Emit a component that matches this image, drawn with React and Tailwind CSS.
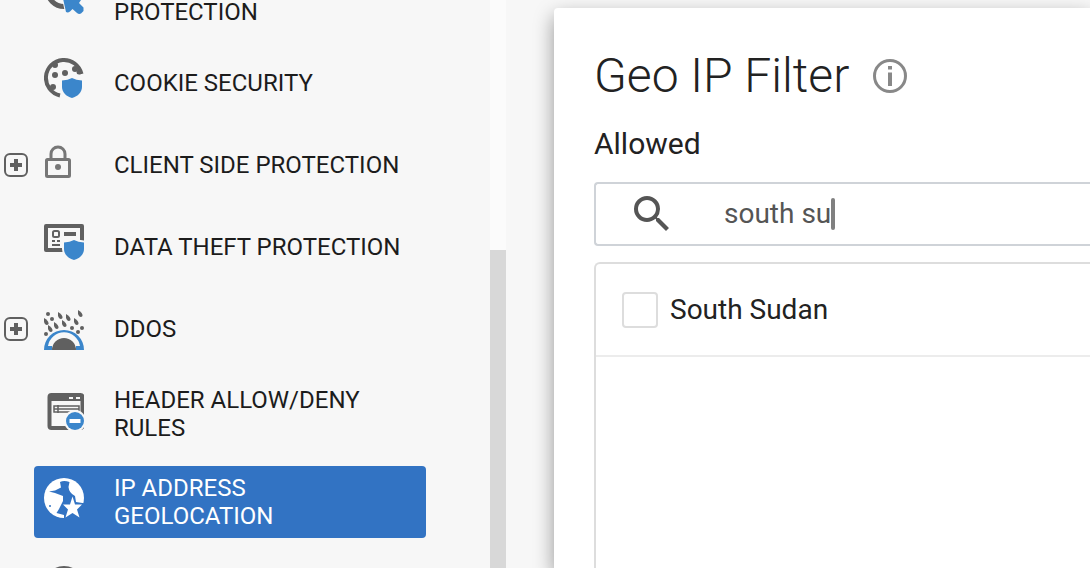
import { useState } from 'react';
import { MdSearch } from 'react-icons/md';
import clsx from 'clsx';

const SHIELD = 'M0 2.5Q6 2 10 0Q14 2 20 2.5V9C20 14 16 18.5 10 20C4 18.5 0 14 0 9Z';

const DROPS = [[16, 15], [24, 17], [36, 13], [2, 21], [12, 25], [20, 23], [32, 21], [6, 28]];
const DOTS = [[4, 13], [8, 18], [28, 27], [2, 33], [34, 31], [38, 27]];

function Icon({ children }) {
  return (
    <svg viewBox="0 0 40 56" className="w-10 h-14 shrink-0" fill="none" aria-hidden="true">
      {children}
    </svg>
  );
}

function PointerIcon() {
  return (
    <Icon>
      <circle cx="20" cy="20" r="16.500" stroke="#606060" strokeWidth="5" />
      <path d="M18 24L41 24L35 33L39.500 37.500V41L37 43.500Q35 44.500 33 43L28.500 39L26 41.500Q24 43 22 42Z" fill="#3b86cb" stroke="#f7f7f7" strokeWidth="2" paintOrder="stroke" />
    </Icon>
  );
}

function CookieIcon() {
  return (
    <Icon>
      <path d="M37.500 19A18 18 0 1 0 16 40.500" stroke="#606060" strokeWidth="4" />
      <g fill="#606060">
        <circle cx="11" cy="10" r="3" />
        <circle cx="11" cy="20" r="3" />
        <circle cx="21" cy="18" r="3" />
        <circle cx="31" cy="14" r="3" />
        <circle cx="35" cy="17" r="2.500" />
        <circle cx="9" cy="32" r="3" />
      </g>
      <path d={SHIELD} transform="translate(18 23)" fill="#3b86cb" />
    </Icon>
  );
}

function LockIcon() {
  return (
    <Icon>
      <path d="M7 21V17A7 7 0 0 1 21 17V21" stroke="#777" strokeWidth="3" />
      <rect x="2.500" y="22.500" width="23" height="17" rx="1" stroke="#777" strokeWidth="3" />
      <circle cx="14" cy="30" r="3" fill="#777" />
    </Icon>
  );
}

function CardIcon() {
  return (
    <Icon>
      <rect x="2" y="7" width="36" height="24" stroke="#606060" strokeWidth="4" strokeLinejoin="round" />
      <rect x="9" y="12" width="6" height="6" rx="1.500" stroke="#606060" strokeWidth="2" />
      <path d="M20 15H32" stroke="#606060" strokeWidth="4" />
      <path d="M8 22H11M13 22H16M8 26H16" stroke="#606060" strokeWidth="2" />
      <path d={SHIELD} transform="translate(20 21)" fill="#3b86cb" stroke="#f7f7f7" strokeWidth="4" paintOrder="stroke" />
    </Icon>
  );
}

function StormIcon() {
  return (
    <Icon>
      <g fill="#606060">
        {DROPS.map(([x, y]) => (
          <path key={`${x}-${y}`} d={`M${x - 2} ${y - 4}Q${x + 3} ${y - 1} ${x + 2.5} ${y + 2}Q${x + 1} ${y + 4} ${x - 1} ${y + 2}Q${x - 2.5} ${y} ${x - 2} ${y - 4}Z`} />
        ))}
        {DOTS.map(([x, y]) => <circle key={`${x}-${y}`} cx={x} cy={y} r="2" />)}
        <path d="M8 49A12 12 0 0 1 32 49Z" />
      </g>
      <path d="M0 49A20 20 0 0 1 40 49H32V45H36A16.200 16.200 0 0 0 4 45H8V49Z" fill="#3b86cb" />
    </Icon>
  );
}

function WindowIcon() {
  return (
    <Icon>
      <rect x="5.500" y="9" width="33" height="33" rx="2" stroke="#606060" strokeWidth="4" />
      <path d="M4 9H40V15H4Z" fill="#606060" />
      <path d="M25 12H29M32 12H36" stroke="#f7f7f7" strokeWidth="2" />
      <path d="M10 20H35V26H10ZM10 23H35M14 19V27" stroke="#606060" strokeWidth="1.500" />
      <circle cx="31" cy="35" r="11" fill="#f7f7f7" />
      <circle cx="31" cy="35" r="9" fill="#3b86cb" />
      <path d="M25.500 35H36.500" stroke="#fff" strokeWidth="4" />
    </Icon>
  );
}

function GlobeIcon() {
  return (
    <Icon>
      <circle cx="20" cy="24" r="20" fill="#fff" />
      <path d="M16 8Q20 6 25.500 8L24.500 13Q25 19 31 22L32 28L41 29.500V46H20V41L12.500 39L15 35L19 27V22L11 19L5 17.500L11 16.500L17 13.500Z" fill="#3273c3" />
      <circle cx="6" cy="32" r="1" fill="#3273c3" />
      <path d="M28.500 22.500L31 30.500H38L33 35.500L35.500 43.500L28.500 39L21.500 43.500L24 35.500L19 30.500H26Z" fill="#fff" />
    </Icon>
  );
}

function RingIcon() {
  return (
    <Icon>
      <circle cx="20" cy="27" r="18" stroke="#606060" strokeWidth="4" />
    </Icon>
  );
}

function InfoIcon() {
  return (
    <svg viewBox="0 0 34 34" className="w-[34px] h-[34px]" fill="none" aria-hidden="true">
      <circle cx="17" cy="17" r="15.500" stroke="#888" strokeWidth="3" />
      <path d="M17 7V10.500M17 13.500V27" stroke="#888" strokeWidth="4" />
    </svg>
  );
}

const NAV_ITEMS = [
  { id: 'protection', icon: PointerIcon, label: 'PROTECTION', tall: true },
  { id: 'cookie', icon: CookieIcon, label: 'COOKIE SECURITY' },
  { id: 'client', icon: LockIcon, label: 'CLIENT SIDE PROTECTION', expandable: true },
  { id: 'data', icon: CardIcon, label: 'DATA THEFT PROTECTION' },
  { id: 'ddos', icon: StormIcon, label: 'DDOS', expandable: true },
  { id: 'header', icon: WindowIcon, label: 'HEADER ALLOW/DENY RULES' },
  { id: 'geo', icon: GlobeIcon, label: 'IP ADDRESS GEOLOCATION', active: true },
  { id: 'more', icon: RingIcon, label: '' },
];

function NavItem({ id, icon: ItemIcon, label, expandable, active, tall }) {
  return (
    <li className="flex items-center gap-1.5 pl-1">
      <div className="w-6 shrink-0">
        {expandable && (
          <button type="button" aria-label={`Expand ${label}`} className="flex items-center justify-center w-6 h-6 rounded-md border-2 border-[#606060]">
            <svg viewBox="0 0 12 12" className="w-3 h-3" stroke="#606060" strokeWidth="4">
              <path d="M0 6H12M6 0V12" />
            </svg>
          </button>
        )}
      </div>
      <a
        href={`#${id}`}
        className={clsx(
          'flex w-[392px] pl-2.5 pr-5 gap-[30px] rounded text-2xl leading-7',
          tall ? 'items-end h-[72px] pb-2' : 'items-center min-h-[66px]',
          active ? 'bg-[#3273c3] text-white' : 'text-[#1c1c1c]'
        )}
      >
        <ItemIcon />
        <span className={clsx(!tall && 'py-2')}>{label}</span>
      </a>
    </li>
  );
}

function Sidebar() {
  return (
    <aside className="flex w-[506px] shrink-0 overflow-hidden">
      <nav className="flex-1 -mt-[38px]">
        <ul className="flex flex-col gap-4">
          {NAV_ITEMS.map((item) => <NavItem key={item.id} {...item} />)}
        </ul>
      </nav>
      {/* Scrollbar */}
      <div className="w-4 bg-[#fbfbfb] pt-[250px]">
        <div className="h-full bg-[#d8d8d8]" />
      </div>
    </aside>
  );
}

export default function App() {
  const [query, setQuery] = useState('south su');

  return (
    <div className="flex h-screen overflow-hidden bg-[#f7f7f7] font-['Roboto',sans-serif] text-[#222]">
      <Sidebar />
      <main className="flex flex-1 min-w-0 pl-12 pt-2">
        <section className="flex flex-col flex-1 min-w-0 pl-10 pt-10 bg-white rounded-tl shadow-[0_8px_20px_rgba(0,0,0,0.4)]">
          <div className="flex items-center gap-6">
            <h1 className="text-5xl leading-14 font-light whitespace-nowrap">Geo IP Filter</h1>
            <button type="button" aria-label="About Geo IP Filter">
              <InfoIcon />
            </button>
          </div>
          <label htmlFor="allowed" className="mt-[22px] mb-5 text-[30px] leading-9">Allowed</label>
          <div className="flex items-center h-16 shrink-0 pl-8 border-2 border-r-0 border-[#cfd3d8] rounded-l">
            <MdSearch className="w-12 h-12 shrink-0 mr-12 text-[#555]" />
            <input
              id="allowed"
              type="text"
              value={query}
              onChange={(e) => setQuery(e.target.value)}
              className="field-sizing-content text-[28px] leading-8 text-[#555] caret-transparent outline-none"
            />
            <span className="w-1 h-8 rounded-xs bg-[#808080]" />
          </div>
          <div className="flex-1 mt-4 border-2 border-r-0 border-b-0 border-[#ddd] rounded-tl-md">
            <label className="flex items-center gap-3 h-[93px] pl-[26px] border-b-2 border-[#ececec] text-[28px] leading-8">
              <input type="checkbox" className="appearance-none w-9 h-9 border-2 border-[#ddd] rounded bg-white" />
              South Sudan
            </label>
          </div>
        </section>
      </main>
    </div>
  );
}
